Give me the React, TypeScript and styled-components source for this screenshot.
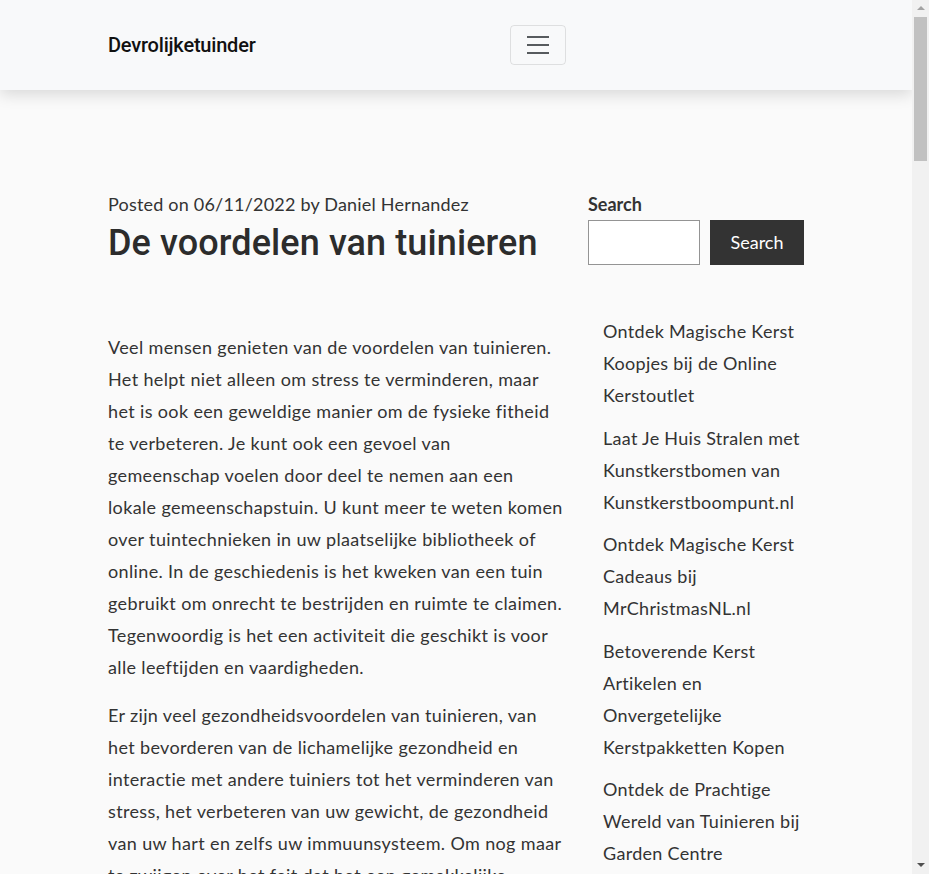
import styled, { createGlobalStyle } from "styled-components";

const GlobalStyle = createGlobalStyle`
  html, body {
    margin: 0;
    padding: 0;
    height: 100%;
    overflow: hidden;
  }
  body {
    background: #fafafa;
    color: #333;
    font-family: Lato, "Liberation Sans", sans-serif;
    font-size: 18px;
    line-height: 1.5;
  }
  #root {
    height: 100%;
  }
  * {
    box-sizing: border-box;
  }
`;

const Shell = styled.div`
  display: flex;
  height: 100vh;
`;

const Viewport = styled.div`
  flex: 1;
  min-width: 0;
  overflow: hidden;
`;

const ScrollTrack = styled.div`
  width: 17px;
  flex-shrink: 0;
  background: #f1f1f1;
  display: flex;
  flex-direction: column;
  align-items: center;
`;

const ScrollArrow = styled.div`
  height: 17px;
  width: 100%;
  display: flex;
  align-items: center;
  justify-content: center;
`;

const ScrollThumb = styled.div`
  width: 13px;
  height: 144px;
  background: #c1c1c1;
`;

const ScrollSpacer = styled.div`
  flex: 1;
`;

const Header = styled.header`
  background: #f8f9fa;
  height: 90px;
  box-shadow: 0 5px 14px rgba(0, 0, 0, 0.13);
  position: relative;
  z-index: 2;
`;

const Container = styled.div`
  width: 720px;
  margin: 0 auto;
  padding: 0 12px;
`;

const NavBar = styled(Container)`
  height: 90px;
  display: grid;
  grid-template-columns: 402px auto;
  align-items: center;
  justify-content: start;
`;

const Brand = styled.a`
  font-family: Roboto, "Liberation Sans", sans-serif;
  font-weight: 500;
  font-size: 20px;
  color: #111;
  text-decoration: none;
  letter-spacing: -0.2px;
`;

const Toggler = styled.button`
  width: 56px;
  height: 40px;
  border: 1px solid rgba(0, 0, 0, 0.1);
  border-radius: 4px;
  background: transparent;
  display: flex;
  align-items: center;
  justify-content: center;
  padding: 0;
`;

const Main = styled(Container)`
  display: grid;
  grid-template-columns: 456px 216px;
  column-gap: 24px;
  padding-top: 103px;
  padding-bottom: 60px;
`;

const Meta = styled.div`
  font-size: 18px;
  line-height: 22px;
  letter-spacing: 0.2px;
`;

const Title = styled.h1`
  font-family: Roboto, "Liberation Sans", sans-serif;
  font-weight: 500;
  font-size: 36px;
  line-height: 44px;
  letter-spacing: 0.1px;
  margin: 6px 0 0;
  color: #2c2c2c;
`;

const Article = styled.article`
  padding-top: 66px;
  letter-spacing: 0.36px;
`;

const Paragraph = styled.p`
  margin: 0 0 16px;
  line-height: 32px;
`;

const Sidebar = styled.aside``;

const SearchLabel = styled.label`
  display: block;
  font-weight: 700;
  font-size: 18px;
  line-height: 22px;
  margin-bottom: 5px;
`;

const SearchRow = styled.div`
  display: flex;
  gap: 10px;
`;

const SearchInput = styled.input`
  width: 112px;
  height: 45px;
  border: 1px solid #949494;
  background: #fff;
  border-radius: 0;
`;

const SearchButton = styled.button`
  width: 94px;
  height: 45px;
  border: none;
  background: #333;
  color: #fff;
  font-family: Lato, "Liberation Sans", sans-serif;
  font-size: 18px;
  padding: 0 0 2px;
`;

const PostList = styled.ul`
  list-style: none;
  margin: 50px 0 0;
  padding: 0 0 0 15px;
  letter-spacing: 0.3px;
`;

const PostItem = styled.li`
  line-height: 32px;
  margin-bottom: 10.5px;

  a {
    color: #333;
    text-decoration: none;
  }
`;

const posts = [
  "Ontdek Magische Kerst Koopjes bij de Online Kerstoutlet",
  "Laat Je Huis Stralen met Kunstkerstbomen van Kunstkerstboompunt.nl",
  "Ontdek Magische Kerst Cadeaus bij MrChristmasNL.nl",
  "Betoverende Kerst Artikelen en Onvergetelijke Kerstpakketten Kopen",
  "Ontdek de Prachtige Wereld van Tuinieren bij Garden Centre",
];

const paragraphs = [
  "Veel mensen genieten van de voordelen van tuinieren. Het helpt niet alleen om stress te verminderen, maar het is ook een geweldige manier om de fysieke fitheid te verbeteren. Je kunt ook een gevoel van gemeenschap voelen door deel te nemen aan een lokale gemeenschapstuin. U kunt meer te weten komen over tuintechnieken in uw plaatselijke bibliotheek of online. In de geschiedenis is het kweken van een tuin gebruikt om onrecht te bestrijden en ruimte te claimen. Tegenwoordig is het een activiteit die geschikt is voor alle leeftijden en vaardigheden.",
  "Er zijn veel gezondheidsvoordelen van tuinieren, van het bevorderen van de lichamelijke gezondheid en interactie met andere tuiniers tot het verminderen van stress, het verbeteren van uw gewicht, de gezondheid van uw hart en zelfs uw immuunsysteem. Om nog maar te zwijgen over het feit dat het een gemakkelijke manier is om meer tijd buiten door te brengen.",
];

const App = () => {
  return (
    <Shell>
      <GlobalStyle />
      <Viewport>
        <Header>
          <NavBar>
            <Brand href="#">Devrolijketuinder</Brand>
            <Toggler aria-label="Menu">
              <svg width="30" height="30" viewBox="0 0 30 30">
                <path
                  d="M4 7h22M4 15h22M4 23h22"
                  stroke="rgba(33,37,41,0.75)"
                  strokeWidth="2"
                />
              </svg>
            </Toggler>
          </NavBar>
        </Header>
        <Main>
          <div>
            <Meta>Posted on 06/11/2022 by Daniel Hernandez</Meta>
            <Title>De voordelen van tuinieren</Title>
            <Article>
              {paragraphs.map((p, i) => (
                <Paragraph key={i}>{p}</Paragraph>
              ))}
            </Article>
          </div>
          <Sidebar>
            <SearchLabel htmlFor="s">Search</SearchLabel>
            <SearchRow>
              <SearchInput id="s" type="text" />
              <SearchButton>Search</SearchButton>
            </SearchRow>
            <PostList>
              {posts.map((t) => (
                <PostItem key={t}>
                  <a href="#">{t}</a>
                </PostItem>
              ))}
            </PostList>
          </Sidebar>
        </Main>
      </Viewport>
      <ScrollTrack>
        <ScrollArrow>
          <svg width="8" height="5" viewBox="0 0 8 5">
            <polygon points="4,0 8,4 0,4" fill="#a3a3a3" />
          </svg>
        </ScrollArrow>
        <ScrollThumb />
        <ScrollSpacer />
        <ScrollArrow>
          <svg width="8" height="5" viewBox="0 0 8 5">
            <polygon points="0,0 8,0 4,4" fill="#505050" />
          </svg>
        </ScrollArrow>
      </ScrollTrack>
    </Shell>
  );
};

export default App;
